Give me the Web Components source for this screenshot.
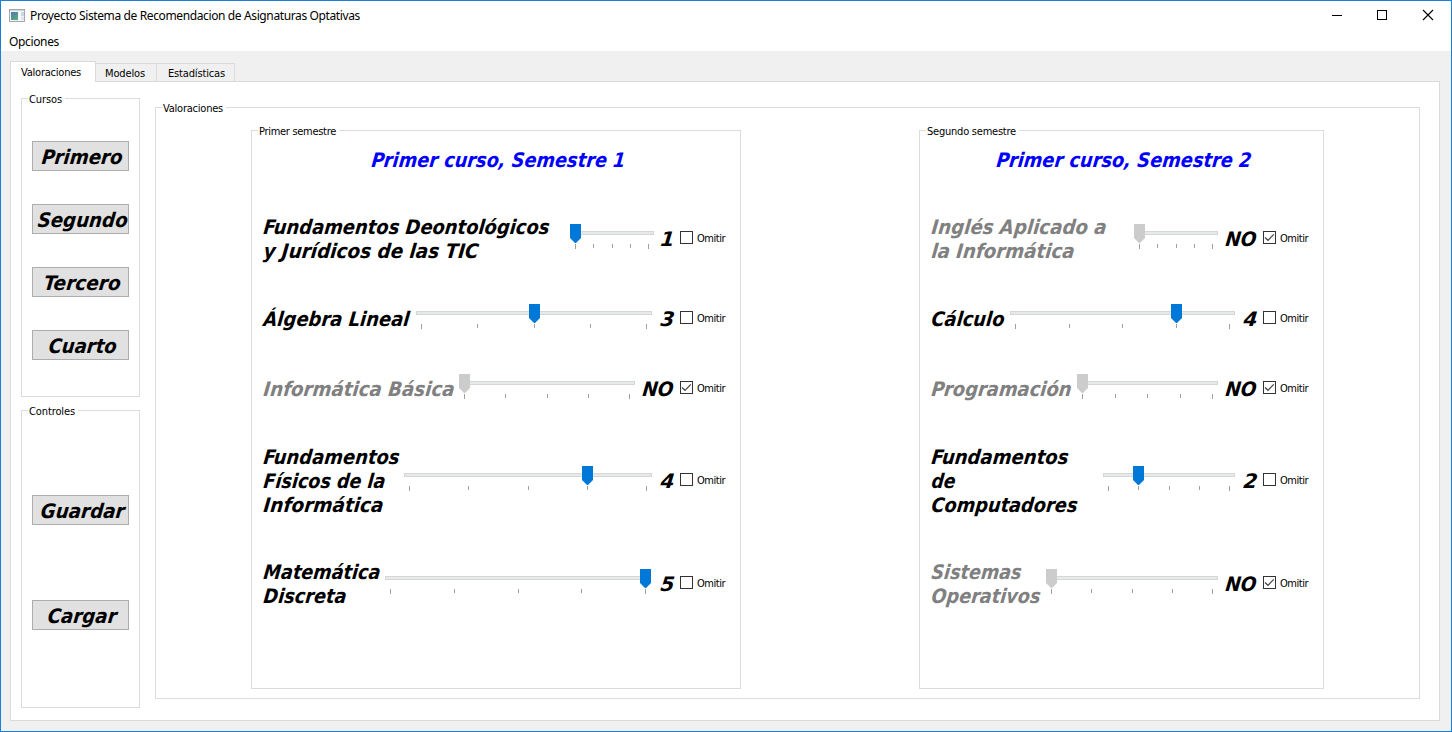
<!DOCTYPE html>
<html lang="es">
<head>
<meta charset="utf-8">
<title>Proyecto Sistema de Recomendacion de Asignaturas Optativas</title>
<style>
html,body{margin:0;height:100%;overflow:hidden}
body{font-family:"DejaVu Sans Condensed","DejaVu Sans",sans-serif;font-size:11px;color:#000}
</style>
</head>
<body>
<app-window>
  <tab-strip slot="tabs"></tab-strip>
  <div slot="side" style="display:contents">
    <group-box label="Cursos" lw="33" style="height:299px;margin-top:-1px">
      <side-button w="81" style="margin-top:42px">Primero</side-button>
      <side-button w="90" style="margin-top:33px">Segundo</side-button>
      <side-button w="77" style="margin-top:33px">Tercero</side-button>
      <side-button w="68" style="margin-top:33px">Cuarto</side-button>
    </group-box>
    <group-box label="Controles" lw="46" style="height:298px;margin-top:13px">
      <side-button w="84" style="margin-top:84px">Guardar</side-button>
      <side-button w="69" style="margin-top:75px">Cargar</side-button>
    </group-box>
  </div>
  <group-box slot="main" label="Valoraciones" lw="60" row style="width:1265px;height:592px;margin-top:8px">
    <group-box label="Primer semestre" lw="77" style="width:490px;height:559px;margin:22px 0 0 95px">
      <term-title w="254">Primer curso, Semestre 1</term-title>
      <subject-row style="margin-top:42px" lines="Fundamentos Deontológicos:286|y Jurídicos de las TIC:215" lead="308" track="84" value="1"></subject-row>
      <subject-row style="margin-top:44px" lines="Álgebra Lineal:146" lead="154" track="236" value="3"></subject-row>
      <subject-row style="margin-top:46px" lines="Informática Básica:191" lead="197" track="176" value="NO"></subject-row>
      <subject-row style="margin-top:44px" lines="Fundamentos:136|Físicos de la:122|Informática:120" lead="142" track="248" value="4"></subject-row>
      <subject-row style="margin-top:43px" lines="Matemática:117|Discreta:83" lead="123" track="266" value="5"></subject-row>
    </group-box>
    <group-box label="Segundo semestre" lw="89" style="width:405px;height:559px;margin:22px 0 0 178px">
      <term-title w="255">Primer curso, Semestre 2</term-title>
      <subject-row style="margin-top:42px" lines="Inglés Aplicado a:175|la Informática:143" lead="204" track="84" value="NO"></subject-row>
      <subject-row style="margin-top:44px" lines="Cálculo:73" lead="80" track="225" value="4"></subject-row>
      <subject-row style="margin-top:46px" lines="Programación:140" lead="147" track="141" value="NO"></subject-row>
      <subject-row style="margin-top:44px" lines="Fundamentos:137|de:24|Computadores:146" lead="173" track="132" value="2"></subject-row>
      <subject-row style="margin-top:43px" lines="Sistemas:90|Operativos:109" lead="116" track="172" value="NO"></subject-row>
    </group-box>
  </group-box>
</app-window>

<script>
const define = (name, html, init) => customElements.define(name, class extends HTMLElement {
  connectedCallback() {
    if (this.shadowRoot) return;
    const root = this.attachShadow({mode: 'open'});
    root.innerHTML = typeof html === 'function' ? html(this) : html;
    if (init) init(this, root);
  }
});

/* One line of text set to a given width: small text is spaced out, bold text
   is widened and slanted a little further than the font's own oblique. */
define('fit-text', `<style>:host{display:block;white-space:pre}span{display:inline-block;white-space:pre;transform-origin:0 78%}</style><span></span>`, (el, root) => {
  const s = root.querySelector('span');
  const t = el.getAttribute('text'), w = parseFloat(el.getAttribute('w'));
  s.textContent = t;
  const natural = s.getBoundingClientRect().width;
  if (getComputedStyle(el).fontStyle === 'italic') {
    el.style.width = w + 'px';
    s.style.transform = `skewX(-6deg) scaleX(${(w / natural).toFixed(4)})`;
  } else {
    s.style.letterSpacing = ((w - natural) / t.length).toFixed(3) + 'px';
  }
});

define('app-window', `<style>
:host{display:flex;flex-direction:column;box-sizing:border-box;width:1452px;height:732px;border:1px solid #1a80d5;background:#f0f0f0}
header{display:flex;height:30px;background:#fff;font-family:"Noto Sans","Open Sans",sans-serif;font-size:12px}
header .ico{margin:8px 0 0 8px;width:16px;height:13px;display:block}
header fit-text{margin:6px 0 0 5px;line-height:18px;flex:1}
header svg.b{width:46px;height:30px;display:block}
header svg.b.s{margin-left:1px;margin-right:-1px}
nav{height:20px;background:#fff;font-family:"Noto Sans","Open Sans",sans-serif;font-size:12px;line-height:18px;padding:2px 8px 0;box-sizing:border-box}
.tabs{padding:10px 0 0 9px;height:20px}
.page{display:flex;box-sizing:border-box;width:1430px;height:640px;margin-left:9px;border:1px solid #dadada;background:#fff;padding:17px 0 0 10px}
.side{display:flex;flex-direction:column;width:119px;margin-right:15px}
</style>
<header>
<svg class="ico" viewBox="0 0 16 13"><defs><linearGradient id="g" x1="0" y1="0" x2="0.6" y2="1"><stop offset="0" stop-color="#5277ad"/><stop offset="1" stop-color="#55a981"/></linearGradient></defs><rect x=".5" y=".5" width="15" height="12" fill="#f1f3f5" stroke="#a3a8ad"/><rect x="1" y="1" width="14" height="1" fill="#cfd4da"/><rect x="2" y="3" width="7" height="8" fill="url(#g)"/><rect x="10" y="2" width="1" height="10" fill="#fff"/><rect x="12" y="3" width="3" height="4" fill="#cbd8e4"/><rect x="12" y="8" width="3" height="3" fill="#dfe3e7"/></svg>
<fit-text text="Proyecto Sistema de Recomendacion de Asignaturas Optativas" w="330"></fit-text>
<svg class="b s" viewBox="0 0 46 30"><path d="M18 14.500h10" stroke="#000"/></svg>
<svg class="b s" viewBox="0 0 46 30"><rect x="17.500" y="9.500" width="9" height="9" fill="none" stroke="#000"/></svg>
<svg class="b" viewBox="0 0 46 30"><path d="M18 9l10 10M28 9l-10 10" stroke="#000" stroke-width="1.1"/></svg>
</header>
<nav><fit-text text="Opciones" w="50"></fit-text></nav>
<div class="tabs"><slot name="tabs"></slot></div>
<div class="page"><div class="side"><slot name="side"></slot></div><slot name="main"></slot></div>`);

define('tab-strip', `<style>
:host{display:flex;align-items:flex-end;height:21px;position:relative}
div{box-sizing:border-box;border:1px solid #dadada;border-left:0;border-bottom:0;height:18px;margin-bottom:1px;background:#f0f0f0;line-height:19px}
.on{height:21px;margin:0;width:86px;background:#fff;border-left:1px solid #dadada;padding-left:10px;line-height:21px}
</style><div class="on"><fit-text text="Valoraciones" w="60"></fit-text></div><div style="width:61px;padding-left:9px"><fit-text text="Modelos" w="40"></fit-text></div><div style="width:78px;padding-left:11px"><fit-text text="Estadísticas" w="57"></fit-text></div>`);

define('group-box', el => `<style>
:host{display:flex;flex-direction:column;position:relative;box-sizing:border-box;border:1px solid #dcdcdc;flex:none}
:host([row]){flex-direction:row;align-items:flex-start}
.l{position:absolute;left:6px;top:-6px;height:14px;line-height:14px;background:#fff;padding:0 3px 0 1px}
</style><div class="l"><fit-text text="${el.getAttribute('label')}" w="${el.getAttribute('lw')}"></fit-text></div><slot></slot>`);

define('side-button', el => `<style>
:host{display:flex;flex:none;justify-content:center;box-sizing:border-box;width:97px;height:30px;margin-left:10px;border:1px solid #adadad;background:#e1e1e1;font:italic bold 20px/30px "DejaVu Sans Condensed","DejaVu Sans",sans-serif;padding-left:2px}
</style><fit-text text="${el.textContent.trim()}" w="${el.getAttribute('w')}"></fit-text>`);

define('term-title', el => `<style>
:host{display:flex;flex:none;justify-content:center;height:24px;margin-top:17px;padding-left:3px;color:#00f;font:italic bold 20px/24px "DejaVu Sans Condensed","DejaVu Sans",sans-serif}
</style><fit-text text="${el.textContent.trim()}" w="${el.getAttribute('w')}"></fit-text>`);

/* Value slider with five stops; the groove is w pixels wide and the thumb 11. */
define('tick-slider', el => {
  const w = +el.getAttribute('w'), v = +el.getAttribute('v'), off = el.hasAttribute('off');
  const at = i => Math.round((w - 11) * i / 4 + (i % 4 ? 0.01 : 0));
  const x = at(v - 1);
  let ticks = '';
  for (let i = 0; i < 5; i++) ticks += `<rect x="${at(i) + 5}" y="20" width="1" height="${i % 4 ? 4 : 5}" fill="#a3a195"/>`;
  return `<style>:host{display:block;width:${w}px;height:28px;flex:none}svg{display:block}</style>
<svg width="${w}" height="28"><rect x=".5" y="7.500" width="${w - 1}" height="3" fill="#e7eaea" stroke="#d6d6d6"/>${ticks}<path d="M${x} 0h11v14l-5 5h-1l-5-5z" fill="${off ? '#ccc' : '#0078d7'}"/></svg>`;
});

define('check-box', el => `<style>
:host{display:flex;align-items:center;flex:none;height:15px}
svg{display:block;width:13px;height:13px;margin-right:4px}
fit-text{padding-top:3px}
</style><svg viewBox="0 0 13 13"><rect x=".5" y=".5" width="12" height="12" fill="#fff" stroke="#333"/>${el.hasAttribute('checked') ? '<path d="M2 6.500L5 9.300L10.800 3.300" fill="none" stroke="#444" stroke-width="1.200"/>' : ''}</svg><fit-text text="Omitir" w="28"></fit-text>`);

define('subject-row', el => {
  const g = n => el.getAttribute(n), off = g('value') === 'NO';
  const lines = g('lines').split('|').map(l => l.split(':'));
  return `<style>
:host{display:flex;align-items:center;flex:none;height:${lines.length * 24}px;padding:0 15px 0 10px;font:italic bold 20px/24px "DejaVu Sans Condensed","DejaVu Sans",sans-serif}
.lead{width:${g('lead')}px;flex:none;padding-top:1px;margin-bottom:-1px}
.name{padding-left:1px;${off ? 'color:#808080' : ''}}
.val{flex:1;display:flex;justify-content:flex-end;padding:1px ${off ? 7 : 6}px 0 0}
check-box{font:11px/14px "DejaVu Sans Condensed","DejaVu Sans",sans-serif;margin-top:-1px}
</style><div class="lead"><div class="name">${lines.map(([t, w]) => `<fit-text text="${t}" w="${w}"></fit-text>`).join('')}</div></div>
<tick-slider w="${g('track')}" v="${off ? 1 : g('value')}" ${off ? 'off' : ''}></tick-slider>
<div class="val"><fit-text text="${g('value')}" w="${off ? 31 : 14}"></fit-text></div>
<check-box ${off ? 'checked' : ''}></check-box>`;
});
</script>
</body>
</html>
